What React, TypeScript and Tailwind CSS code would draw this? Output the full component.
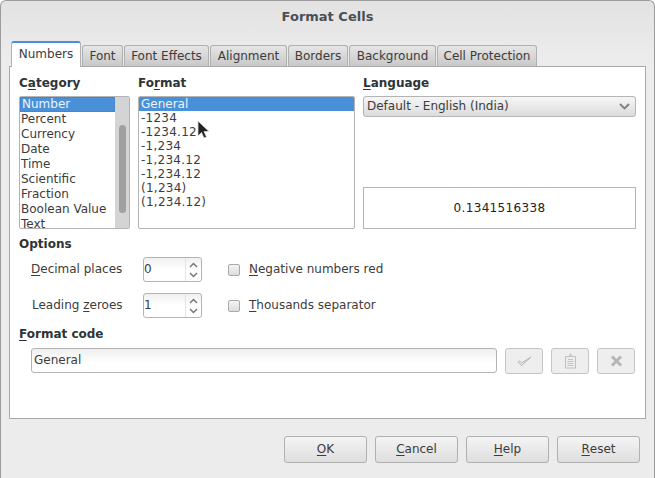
import React from "react";

const tabs: [string, string][] = [
  ["Font", "w-[41px]"],
  ["Font Effects", "w-[85px]"],
  ["Alignment", "w-[77px]"],
  ["Borders", "w-[60px]"],
  ["Background", "w-[87px]"],
  ["Cell Protection", "w-[100px]"],
];

const categories = ["Percent", "Currency", "Date", "Time", "Scientific", "Fraction", "Boolean Value", "Text"];
const formats = ["-1234", "-1234.12", "-1,234", "-1,234.12", "-1,234.12", "(1,234)", "(1,234.12)"];

function U({ children }: { children: React.ReactNode }) {
  return <span className="underline underline-offset-2 decoration-1">{children}</span>;
}

function Spin({ value }: { value: string }) {
  return (
    <div className="w-[59px] h-[25px] flex items-center border border-[#b4b4b4] rounded-[3px] bg-gradient-to-b from-[#f0f0f0] via-white to-white">
      <span className="flex-1 text-[#3c3c3c]">{value}</span>
      <div className="w-[16px] h-full flex flex-col items-center justify-center gap-[4px] border-l border-[#e4e4e4]">
        <svg width="9" height="6" viewBox="0 0 9 6"><path d="M1 5 L4.5 1.5 L8 5" fill="none" stroke="#777" strokeWidth="1.5" /></svg>
        <svg width="9" height="6" viewBox="0 0 9 6"><path d="M1 1 L4.5 4.5 L8 1" fill="none" stroke="#777" strokeWidth="1.5" /></svg>
      </div>
    </div>
  );
}

function Check({ children }: { children: React.ReactNode }) {
  return (
    <div className="flex items-center ml-[26px] gap-[9px]">
      <div className="w-[12px] h-[12px] border border-[#a8a8a8] rounded-[2px] bg-gradient-to-b from-[#f4f4f4] to-[#dcdcdc]" />
      <span className="text-[#3c3c3c]">{children}</span>
    </div>
  );
}

function IconButton({ children }: { children: React.ReactNode }) {
  return (
    <div className="w-[38px] h-[26px] flex items-center justify-center border border-[#c4c4c4] rounded-[3px] bg-[#eeeeee]">
      {children}
    </div>
  );
}

function Button({ children }: { children: React.ReactNode }) {
  return (
    <div className="w-[83px] h-[27px] flex items-center justify-center border border-[#b0b0b0] rounded-[3px] bg-gradient-to-b from-[#f4f4f4] to-[#dedede] text-[#3c3c3c]">
      {children}
    </div>
  );
}

export default function App() {
  return (
    <div
      className="relative w-[655px] h-[478px] overflow-hidden rounded-t-[6px] border border-b-0 border-[#9c9c9c] bg-gradient-to-b from-[#e2e2e2] to-[#ececec] to-[12%] text-[12px] leading-[15px]"
      style={{ fontFamily: '"DejaVu Sans", sans-serif' }}
    >
      <div className="h-[30px] flex items-center justify-center font-bold text-[13px] text-[#4a4f55]">Format Cells</div>

      <div className="h-[35px] ml-[10px] flex items-end">
        <div className="w-[70px] h-[26px] mb-[-1px] pb-[2px] relative z-10 flex items-center justify-center bg-white border border-b-0 border-[#b0b0b0] border-t-2 border-t-[#4a90d9] rounded-t-[3px] text-[#3c3c3c]">
          Numbers
        </div>
        <div className="w-[1px]" />
        {tabs.map(([t, w]) => (
          <div
            key={t}
            className={`${w} h-[21px] mr-[1px] flex items-center justify-center bg-gradient-to-b from-[#e6e6e6] to-[#c8c8c8] border border-b-0 border-[#b0b0b0] rounded-t-[3px] text-[#3c3c3c]`}
          >
            {t}
          </div>
        ))}
      </div>

      <div className="ml-[8px] w-[637px] h-[353px] bg-white border border-[#a8a8a8] pl-[9px] pt-[9px] text-[#3c3c3c]">
        <div className="flex gap-[8px]">
          <div className="w-[111px]">
            <div className="font-bold text-[#2e3436] h-[20px]">C<U>a</U>tegory</div>
            <div className="h-[133px] flex border border-[#b4b4b4] rounded-[2px] overflow-hidden">
              <div className="flex-1 overflow-hidden">
                <div className="h-[15px] bg-[#4a90d9] text-[#eef4fb] pl-[1px] border border-dotted border-[#a8642a] leading-[13px]">Number</div>
                {categories.map((c) => (
                  <div key={c} className="h-[15px] pl-[1px]">{c}</div>
                ))}
              </div>
              <div className="w-[14px] bg-[#d4d4d4] flex justify-center">
                <div className="w-[7px] h-[88px] mt-[28px] rounded-[4px] bg-[#a0a0a0]" />
              </div>
            </div>
          </div>

          <div className="w-[217px]">
            <div className="font-bold text-[#2e3436] h-[20px]">Fo<U>r</U>mat</div>
            <div className="h-[133px] border border-[#b4b4b4] rounded-[2px] overflow-hidden">
              <div className="h-[14px] bg-[#4a90d9] text-[#eef4fb] pl-[2px]">General</div>
              {formats.map((f) => (
                <div key={f} className="h-[14px] pl-[2px] tracking-[0.25px]">{f}</div>
              ))}
            </div>
          </div>

          <div className="w-[273px]">
            <div className="font-bold text-[#2e3436] h-[20px]"><U>L</U>anguage</div>
            <div className="h-[21px] flex items-center justify-between pl-[3px] pr-[5px] border border-[#b4b4b4] rounded-[3px] bg-gradient-to-b from-[#f6f6f6] to-[#dcdcdc]">
              <span>Default - English (India)</span>
              <svg width="11" height="7" viewBox="0 0 11 7"><path d="M1 1 L5.5 5.5 L10 1" fill="none" stroke="#808080" strokeWidth="1.8" /></svg>
            </div>
            <div className="h-[42px] mt-[70px] flex items-center justify-center border border-[#b4b4b4] text-[#222] tracking-[0.33px]">0.1341516338</div>
          </div>
        </div>

        <div className="font-bold text-[#2e3436] mt-[7px] h-[15px] pt-[1px]">Options</div>

        <div className="flex items-center mt-[6px] pl-[12px]">
          <div className="w-[112px]"><U>D</U>ecimal places</div>
          <Spin value="0" />
          <Check><U>N</U>egative numbers red</Check>
        </div>
        <div className="flex items-center mt-[11px] pl-[13px]">
          <div className="w-[111px]">Leading <U>z</U>eroes</div>
          <Spin value="1" />
          <Check><U>T</U>housands separator</Check>
        </div>

        <div className="font-bold text-[#2e3436] mt-[9px] h-[15px]"><U>F</U>ormat code</div>

        <div className="flex mt-[6px] pl-[12px] items-start">
          <div className="w-[466px] h-[25px] flex items-center pl-[2px] border border-[#b4b4b4] rounded-[3px] bg-gradient-to-b from-[#efefef] to-white to-60%">General</div>
          <div className="flex gap-[8px] ml-[8px]">
            <IconButton>
              <svg width="15" height="12" viewBox="0 0 15 12"><path d="M1 7 L4.5 10.5 L14 2 L4.7 8 L2.5 6 Z" fill="#ececec" stroke="#b4b4b4" strokeWidth="1" strokeLinejoin="round" /></svg>
            </IconButton>
            <IconButton>
              <svg width="13" height="16" viewBox="0 0 13 16">
                <path d="M1.5 3.5 H11.5 V15 H1.5 Z" fill="none" stroke="#c0c0c0" />
                <path d="M4 6.5 H9 M3.5 8.5 H9.5 M3.5 10.5 H9.5 M3.5 12.5 H9.5" stroke="#c4c4c4" />
                <path d="M6 3.5 V1 H7 V3.5" fill="none" stroke="#c0c0c0" />
              </svg>
            </IconButton>
            <IconButton>
              <svg width="13" height="12" viewBox="0 0 13 12"><path d="M2 1.5 L11 10.5 M11 1.5 L2 10.5" stroke="#b6b6b6" strokeWidth="3" /></svg>
            </IconButton>
          </div>
        </div>
      </div>

      <div className="flex gap-[8px] ml-[283px] mt-[17px]">
        <Button><U>O</U>K</Button>
        <Button><U>C</U>ancel</Button>
        <Button><U>H</U>elp</Button>
        <Button><U>R</U>eset</Button>
      </div>

      <svg className="absolute left-[196px] top-[119px]" width="14" height="20" viewBox="0 0 14 20">
        <path d="M1 1 V16 L4.5 12.5 L7 18 L9.5 17 L7 11.5 H12 Z" fill="#222" stroke="#ddd" strokeWidth="0.8" />
      </svg>
    </div>
  );
}
